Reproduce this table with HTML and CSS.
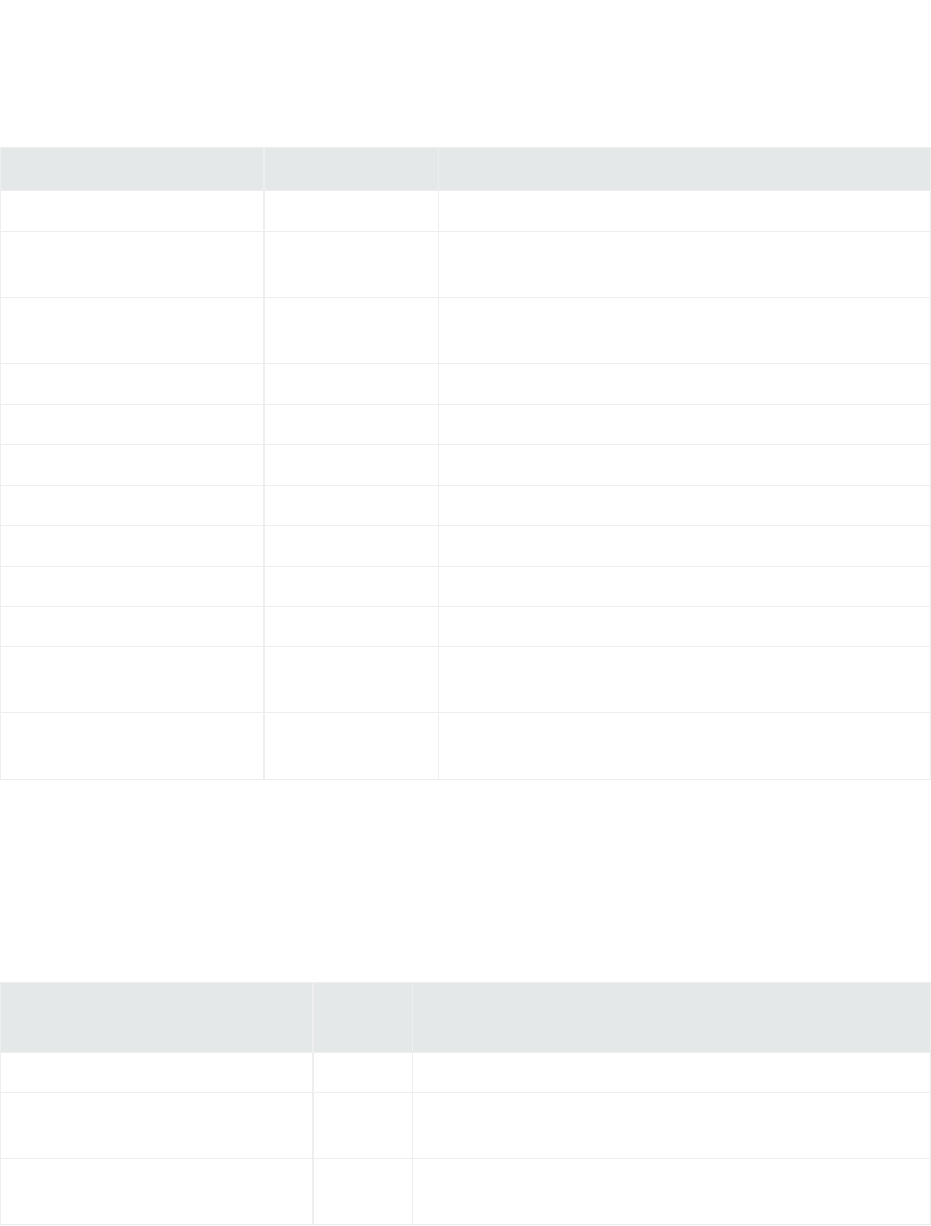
FILE: index.html
```html
<!DOCTYPE html>
<html lang="en">
<head>
    <meta charset="UTF-8">
    <meta name="viewport" content="width=device-width, initial-scale=1.0">
    <title>Tables</title>
    <link rel="stylesheet" href="styles.css">
</head>
<body>
    <table class="grid grid-first">
        <colgroup>
            <col class="c1a">
            <col class="c2a">
            <col>
        </colgroup>
        <thead>
            <tr class="head"><th></th><th></th><th></th></tr>
        </thead>
        <tbody>
            <tr class="wide"><td></td><td></td><td></td></tr>
            <tr class="tall"><td></td><td></td><td></td></tr>
            <tr class="tall"><td></td><td></td><td></td></tr>
            <tr class="wide"><td></td><td></td><td></td></tr>
            <tr><td></td><td></td><td></td></tr>
            <tr class="wide"><td></td><td></td><td></td></tr>
            <tr><td></td><td></td><td></td></tr>
            <tr class="wide"><td></td><td></td><td></td></tr>
            <tr><td></td><td></td><td></td></tr>
            <tr><td></td><td></td><td></td></tr>
            <tr class="tall"><td></td><td></td><td></td></tr>
            <tr class="taller"><td></td><td></td><td></td></tr>
        </tbody>
    </table>

    <table class="grid grid-second">
        <colgroup>
            <col class="c1b">
            <col class="c2b">
            <col>
        </colgroup>
        <thead>
            <tr class="head-tall"><th></th><th></th><th></th></tr>
        </thead>
        <tbody>
            <tr><td></td><td></td><td></td></tr>
            <tr class="tall"><td></td><td></td><td></td></tr>
            <tr class="tall"><td></td><td></td><td></td></tr>
        </tbody>
    </table>
</body>
</html>
```

FILE: styles.css
```css
body {
    margin: 0;
    background-color: #ffffff;
    font-family: 'Open Sans', sans-serif;
    font-size: 14px;
    color: #333333;
}
.grid {
    width: 931px;
    border-collapse: collapse;
    table-layout: fixed;
}
.grid-first {
    margin-top: 147px;
}
.grid-second {
    margin-top: 202px;
}
.c1a { width: 263px; }
.c2a { width: 175px; }
.c1b { width: 312px; }
.c2b { width: 100px; }
th, td {
    padding: 0;
    border: 1px solid #eeeeee;
}
th {
    background-color: #e4e8e9;
}
tr td:first-child,
tr th:first-child {
    border-right-width: 2px;
}
.head th { height: 42px; }
.head-tall th { height: 69px; }
tbody tr td { height: 39px; }
tbody tr.wide td { height: 40px; }
tbody tr.tall td { height: 65px; }
tbody tr.taller td { height: 66px; }
```
